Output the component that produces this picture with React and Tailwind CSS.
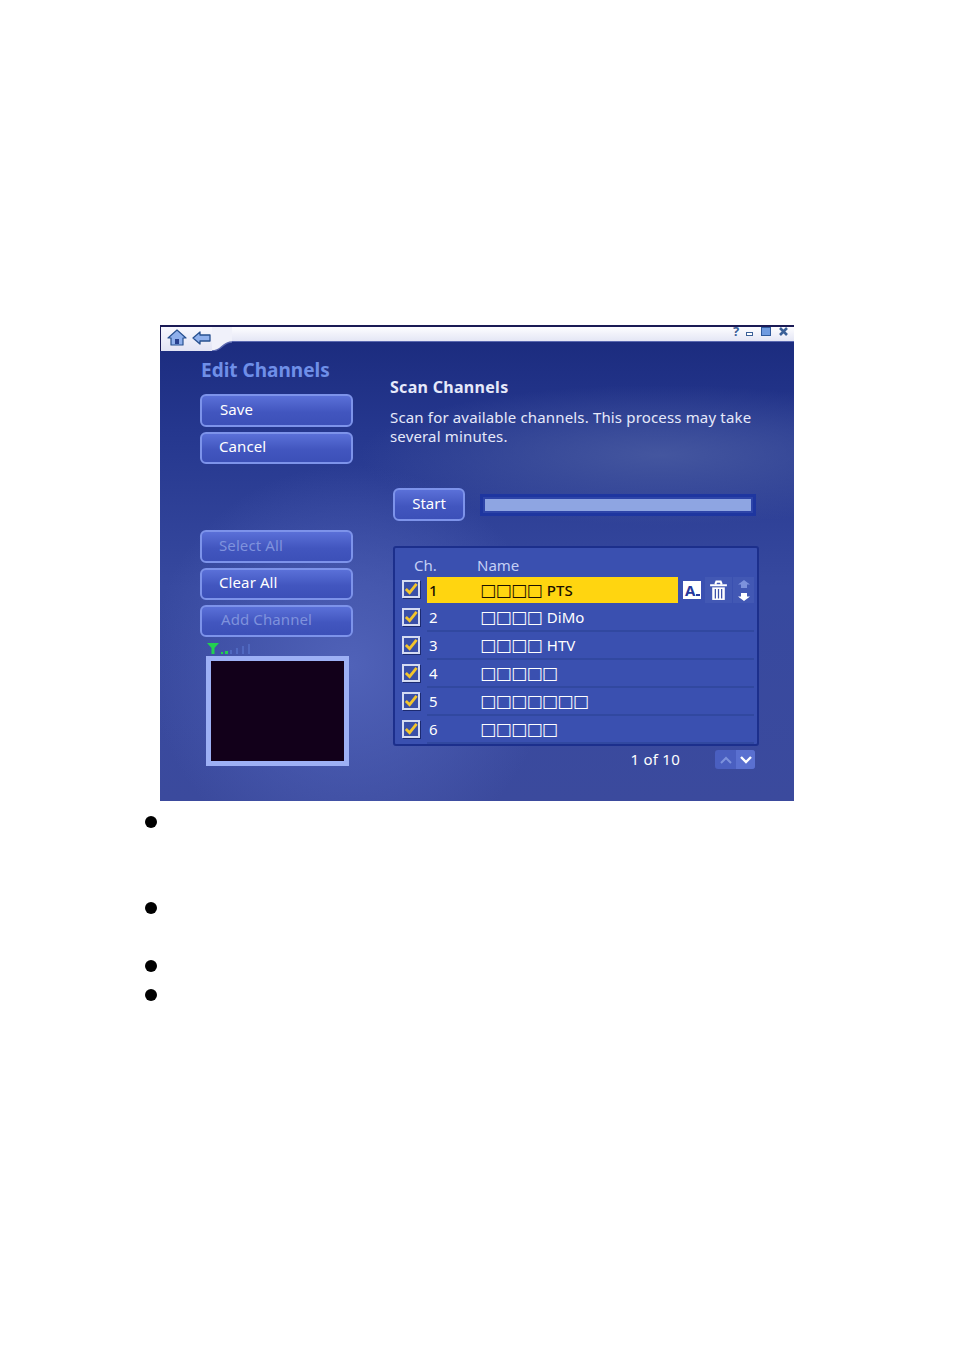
const uiFont = "font-['Noto_Sans',sans-serif]";

const channels = [
  { ch: 1, boxes: "□□□□", name: "PTS" },
  { ch: 2, boxes: "□□□□", name: "DiMo" },
  { ch: 3, boxes: "□□□□", name: "HTV" },
  { ch: 4, boxes: "□□□□□", name: "" },
  { ch: 5, boxes: "□□□□□□□", name: "" },
  { ch: 6, boxes: "□□□□□", name: "" },
];

function HomeIcon() {
  return (
    <svg width="20" height="17" viewBox="0 0 20 17">
      <path d="M10 1 L19 9 L16 9 L16 16 L4 16 L4 9 L1 9 Z" fill="#8fb0ec" stroke="#27508f" strokeWidth="1.2" strokeLinejoin="round" />
      <rect x="8" y="10" width="4" height="5" fill="#27408f" />
    </svg>
  );
}

function BackIcon() {
  return (
    <svg width="19" height="14" viewBox="0 0 19 14">
      <path d="M1 7 L8 1 L8 4 L18 4 L18 10 L8 10 L8 13 Z" fill="#8fb0ec" stroke="#27508f" strokeWidth="1.3" strokeLinejoin="round" />
    </svg>
  );
}

function WindowIcons() {
  return (
    <div className="flex items-center gap-[5px] mr-[6px] mb-[5px]">
      <span className="text-[13px] leading-none font-bold text-[#3a6098] w-[8px]">?</span>
      <span className="w-[7px] h-[4px] mt-[5px] border border-[#3a6098] bg-white" />
      <span className="w-[10px] h-[9px] ml-[3px] border border-[#2f5a9c] bg-[#6f9be0]" />
      <svg width="9" height="9" viewBox="0 0 9 9" className="ml-[3px]">
        <path d="M1 1 L8 8 M8 1 L1 8" stroke="#3a6098" strokeWidth="2.6" />
      </svg>
    </div>
  );
}

function SideButton({ label, disabled, indent = "pl-[17px]", height = "h-[33px]" }) {
  return (
    <button
      className={`block w-[153px] ${height} text-left ${indent} pb-[3px] text-[15px] leading-[25px] tracking-[0.1px] rounded-[6px] border-2 border-[#7d93ea] bg-[linear-gradient(180deg,#5a70d8_0%,#4256bf_55%,#3c50b8_100%)] ${
        disabled ? "text-[#7f92dd]" : "text-white"
      }`}
    >
      {label}
    </button>
  );
}

function Check() {
  return (
    <span className="w-[18px] h-[18px] -mt-[2px] shrink-0 border-2 border-[#d5dbf2] bg-[#3a4fa8] shadow-[1px_1px_0_#1c2a70] flex items-center justify-center">
      <svg width="15" height="14" viewBox="0 0 15 14">
        <path d="M2 7 L6 11 L13.5 1.5" fill="none" stroke="#f4c52a" strokeWidth="3" />
      </svg>
    </span>
  );
}

function RowTools() {
  return (
    <div className="flex items-center ml-[1px] h-[26px]">
      <div className="w-[26px] h-[26px] flex items-center justify-center">
        <span className="w-[18px] h-[18px] bg-white text-[#27389c] text-[15px] leading-[18px] font-bold pl-[2px] relative">
          A
          <span className="absolute right-[1px] bottom-[3px] w-[4px] h-[2px] bg-[#27389c]" />
        </span>
      </div>
      <div className="w-[27px] h-[26px] flex items-center justify-center bg-[#4258b4]">
        <svg width="19" height="21" viewBox="0 0 18 20">
          <path d="M1 5 H17 M6 4 L7 1.5 H11 L12 4" fill="none" stroke="#fff" strokeWidth="2" />
          <path d="M3 7 H15 V19 H3 Z" fill="#fff" />
          <path d="M6 8.5 V17.5 M9 8.5 V17.5 M12 8.5 V17.5" stroke="#3a4fa8" strokeWidth="1.2" />
        </svg>
      </div>
      <div className="w-[21px] h-[26px] ml-[1px] flex flex-col items-center justify-center gap-[5px] bg-[#4258b4]">
        <svg width="12" height="8" viewBox="0 0 12 8"><path d="M6 0 L12 4.5 H9 V8 H3 V4.5 H0 Z" fill="#7d92dc" /></svg>
        <svg width="12" height="8" viewBox="0 0 12 8"><path d="M6 8 L12 3.5 H9 V0 H3 V3.5 H0 Z" fill="#fff" /></svg>
      </div>
    </div>
  );
}

function ChannelRow({ item, active }) {
  return (
    <div className="flex items-center h-[28px] pl-[7px] pr-[3px]">
      <Check />
      <div
        className={`ml-[7px] h-[26px] flex items-center text-[15px] leading-none ${
          active ? "w-[251px] bg-[#ffd510] text-[#1a1000]" : "flex-1 text-white border-b-2 border-[#3148a0] h-[28px]"
        }`}
      >
        <span className={`w-[53px] pl-[2px] ${active ? "font-medium" : ""}`}>{item.ch}</span>
        <span className="font-['DejaVu_Sans',sans-serif] text-[17px] tracking-[-0.6px] leading-none">{item.boxes}</span>
        {item.name && <span className={`ml-[5px] ${active ? "font-medium" : ""}`}>{item.name}</span>}
      </div>
      {active && <RowTools />}
    </div>
  );
}

export default function App() {
  return (
    <div className={`w-[954px] h-[1350px] bg-white pt-[325px] overflow-hidden ${uiFont}`}>
      <div className="ml-[160px] w-[634px] h-[476px] bg-[radial-gradient(ellipse_300px_70px_at_500px_130px,#44569f_0%,transparent_100%),radial-gradient(ellipse_200px_200px_at_190px_340px,#5062b8_0%,transparent_100%),linear-gradient(180deg,#1a2a7c_0%,#25378e_22%,#37499f_55%,#3b4a9d_100%)]">
        <div className="flex items-start h-[26px]">
          <div className="w-[52px] h-[26px] bg-[linear-gradient(180deg,#f8f8fe,#e2e4f4)] border-t-2 border-[#1a1a55] border-l border-l-[#1a1a55] flex items-center pl-[6px] pb-[3px] gap-[5px]">
            <HomeIcon />
            <BackIcon />
          </div>
          <svg width="20" height="26" viewBox="0 0 20 26" className="shrink-0">
            <path d="M0 0 H20 V17 C10 17 10 26 0 26 Z" fill="#f0f1fa" />
            <path d="M0 1 H20" stroke="#1a1a55" strokeWidth="2" />
            <path d="M0 26 C10 26 10 17 20 17" fill="none" stroke="#5a68b0" strokeWidth="1.5" />
          </svg>
          <div className="flex-1 h-[17px] bg-[linear-gradient(180deg,#fdfdff,#e4e6f5)] border-t-2 border-[#1a1a55] border-b border-b-[#5a68b0] flex items-center justify-end">
            <WindowIcons />
          </div>
        </div>

        <div className="flex pl-[40px]">
          <div className="w-[153px]">
            <h1 className="mt-[7px] ml-[1px] text-[19px] leading-[24px] font-bold text-[#6f8fe8] whitespace-nowrap">Edit Channels</h1>
            <div className="mt-[12px] flex flex-col gap-[5px]">
              <SideButton label="Save" indent="pl-[18px]" />
              <SideButton label="Cancel" height="h-[32px]" />
            </div>
            <div className="mt-[66px] flex flex-col gap-[5px]">
              <SideButton label="Select All" disabled />
              <SideButton label="Clear All" height="h-[32px]" />
              <SideButton label="Add Channel" disabled indent="pl-[19px]" height="h-[32px]" />
            </div>
            <div className="mt-[5px] ml-[7px] h-[14px] pb-[2px] flex items-end gap-[2px]">
              <svg width="12" height="11" viewBox="0 0 12 11"><path d="M0 0 H12 L7.5 5 V11 H4.5 V5 Z" fill="#22d050" /></svg>
              <span className="w-[2px] h-[2px] bg-[#22d050]" />
              <span className="w-[3px] h-[3px] bg-[#22d050]" />
              <span className="w-[2px] h-[4px] bg-[#5068c0]" />
              <span className="w-[2px] h-[6px] bg-[#5068c0] ml-[2px]" />
              <span className="w-[2px] h-[8px] bg-[#5068c0] ml-[2px]" />
              <span className="w-[2px] h-[10px] bg-[#5068c0] ml-[2px]" />
            </div>
            <div className="ml-[6px] w-[143px] h-[110px] border-[5px] border-[#9db0f5] bg-[#12001a]" />
          </div>

          <div className="ml-[37px] w-[372px]">
            <h2 className="mt-[26px] text-[16px] leading-[20px] tracking-[0.3px] font-bold text-[#e6e9fa]">Scan Channels</h2>
            <p className="mt-[11px] w-[372px] text-[15px] leading-[19px] tracking-[0.16px] text-[#e6e9fa]">
              Scan for available channels. This process may take several minutes.
            </p>
            <div className="mt-[42px] ml-[3px] flex items-center">
              <button className="w-[72px] h-[33px] pb-[2px] text-[15px] text-white rounded-[6px] border-2 border-[#7d93ea] bg-[linear-gradient(180deg,#5a70d8_0%,#4256bf_55%,#3c50b8_100%)]">
                Start
              </button>
              <div className="ml-[15px] w-[276px] h-[22px] border-[3px] border-[#1e36a0] bg-[#2d44a8] p-[2px]">
                <div className="h-full bg-[#8ea5e2]" />
              </div>
            </div>
            <div className="mt-[25px] ml-[3px] w-[366px] h-[200px] rounded-[3px] border-2 border-[#1c2f8c] bg-[#3a50b0]">
              <div className="h-[28px] pb-[1px] flex items-end text-[15px] leading-[20px] text-[#c4cff5]">
                <span className="ml-[19px] w-[63px]">Ch.</span>
                <span>Name</span>
              </div>
              {channels.map((item) => (
                <ChannelRow key={item.ch} item={item} active={item.ch === 1} />
              ))}
            </div>
            <div className="mt-[4px] ml-[3px] w-[362px] flex items-center justify-end">
              <span className="text-[15px] leading-[20px] tracking-[0.25px] text-white mr-[35px] -mt-[1px]">1 of 10</span>
              <div className="w-[40px] h-[19px] flex rounded-[3px] overflow-hidden bg-[#4a5fc0]">
                <span className="w-[21px] flex items-center justify-center">
                  <svg width="12" height="8" viewBox="0 0 12 8"><path d="M1 7 L6 2 L11 7" fill="none" stroke="#7d92dc" strokeWidth="2" /></svg>
                </span>
                <span className="w-[19px] bg-[#5a70d0] flex items-center justify-center">
                  <svg width="12" height="8" viewBox="0 0 12 8"><path d="M1 1 L6 6 L11 1" fill="none" stroke="#fff" strokeWidth="2.4" /></svg>
                </span>
              </div>
            </div>
          </div>
        </div>
      </div>

      <ul className="ml-[145px]">
        <li className="mt-[15px] w-[12px] h-[12px] rounded-full bg-black" />
        <li className="mt-[74px] w-[12px] h-[12px] rounded-full bg-black" />
        <li className="mt-[46px] w-[12px] h-[12px] rounded-full bg-black" />
        <li className="mt-[17px] w-[12px] h-[12px] rounded-full bg-black" />
      </ul>
    </div>
  );
}
